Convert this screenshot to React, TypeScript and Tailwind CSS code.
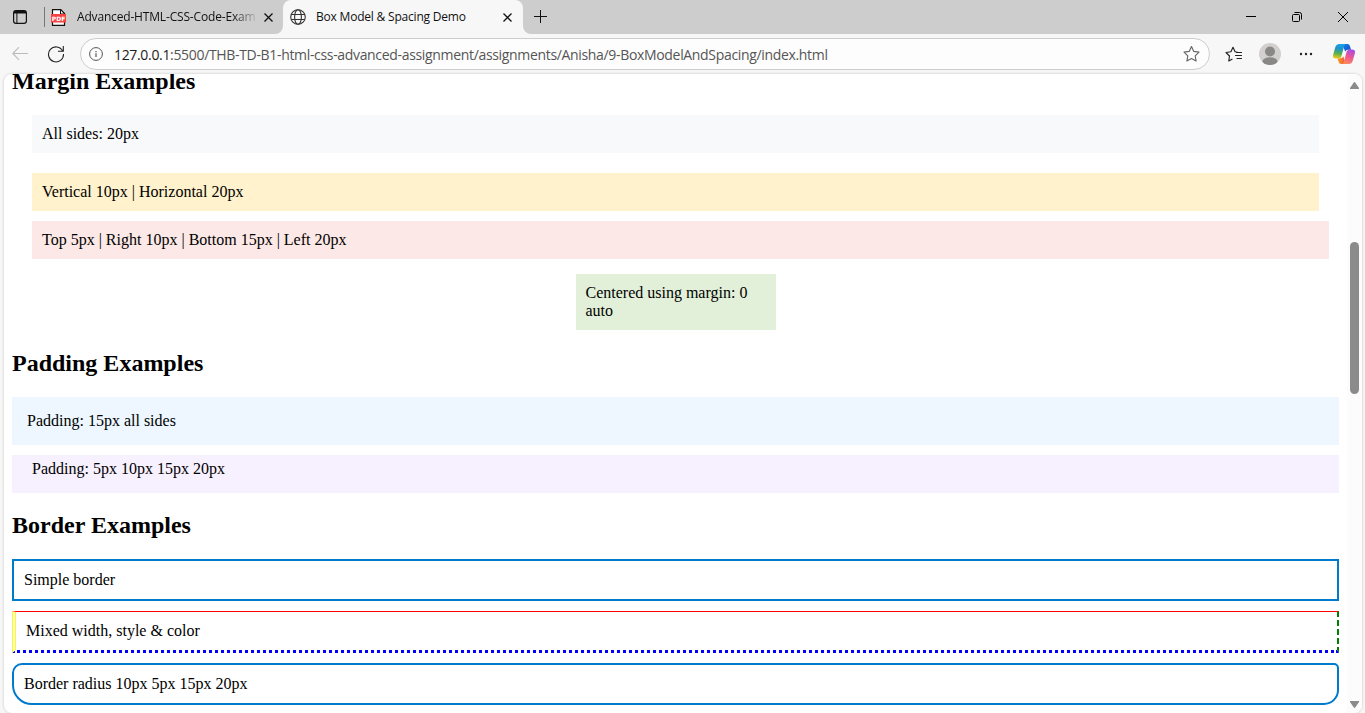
import React from 'react';

const Close = () => (
  <svg width="9" height="9" viewBox="0 0 9 9" stroke="#111" strokeWidth="1.3" className="shrink-0">
    <path d="M.5.5l8 8M8.5.5l-8 8" />
  </svg>
);

const Star = ({ list = false }: { list?: boolean }) => (
  <svg width="18" height="18" viewBox="0 0 18 18" fill="none" stroke={list ? '#222' : '#666'} strokeWidth="1.15" strokeLinejoin="round" strokeLinecap="round">
    {list ? (
      <>
        <path d="M7 14.2l-3.2 1.7.7-4.9L1 7.5l4.9-.7L8 2.3l2.1 4.5 1.9.2" />
        <path d="M11.5 7.5H16.500M10.5 10.5H16.500M12 13.5h4.500" />
      </>
    ) : (
      <path d="M8.500 1.600l2.300 4.800 5.200.7-3.800 3.700.9 5.200-4.600-2.500L3.900 16l.9-5.200L1 7.100l5.200-.7z" />
    )}
  </svg>
);

function TabStrip() {
  return (
    <div className="flex h-[34px] items-stretch bg-[#f7f7f7] text-[12px] text-[#111]">
      <div className="flex w-[283px] items-center rounded-br-lg bg-[#cdcdcd]">
        <svg width="14" height="14" viewBox="0 0 14 14" fill="none" stroke="#111" className="ml-[13px]">
          <rect x=".6" y=".6" width="12.800" height="12.800" rx="2.400" strokeWidth="1.200" />
          <path d="M1 2.200h12" strokeWidth="2.600" />
          <path d="M3.900 3v10.500" strokeWidth="1" />
        </svg>
        <div className="ml-[17px] h-5 w-px bg-[#777]" />
        <svg width="15" height="17" viewBox="0 0 15 17" className="ml-[6px]">
          <path d="M1.500 .7h8.300L13.500 4.500v11.800h-12z" fill="#fff" stroke="#111" strokeWidth="1.200" />
          <path d="M9.500 1v4h4" fill="none" stroke="#111" />
          <rect y="5" width="15" height="8.500" fill="#f44444" />
          <text x="7.500" y="11.500" textAnchor="middle" fontSize="6" fontWeight="700" fill="#fff" fontFamily="DejaVu Sans, sans-serif">PDF</text>
        </svg>
        <div className="ml-[11px] w-[179px] whitespace-nowrap tracking-[-0.17px] [mask-image:linear-gradient(to_right,#000_155px,transparent_182px)]">Advanced-HTML-CSS-Code-Exam</div>
        <div className="ml-[8px]"><Close /></div>
      </div>
      <div className="w-[240px] bg-[linear-gradient(#cdcdcd_50%,#f7f7f7_50%)]">
        <div className="flex h-full items-center rounded-t-lg bg-[#f7f7f7]">
          <svg width="16" height="16" viewBox="0 0 16 16" fill="none" stroke="#333" strokeWidth="1.100" className="ml-[7px]">
            <circle cx="8" cy="8" r="7.300" />
            <ellipse cx="8" cy="8" rx="3.400" ry="7.300" />
            <path d="M1.300 5.500h13.400M1.300 10.500h13.400" />
          </svg>
          <div className="ml-[10px] w-[178px] whitespace-nowrap tracking-[-0.2px]">Box Model &amp; Spacing Demo</div>
          <div className="ml-[9px]"><Close /></div>
        </div>
      </div>
      <div className="flex flex-1 items-center rounded-bl-lg bg-[#cdcdcd]">
        <svg width="13" height="13" viewBox="0 0 13 13" stroke="#111" className="ml-[11px] -mt-[2px]"><path d="M6.500 0v13M0 6.500h13" /></svg>
        <div className="flex-1" />
        <svg width="10" height="10" viewBox="0 0 10 10" stroke="#000"><path d="M0 4.500h10" /></svg>
        <svg width="10" height="10" viewBox="0 0 10 10" stroke="#000" fill="none" className="ml-[36px]">
          <rect x=".5" y="2.500" width="7" height="7" rx="1" /><path d="M2.500.5h5q2 0 2 2v5" />
        </svg>
        <svg width="10" height="10" viewBox="0 0 10 10" stroke="#000" className="ml-[36px] mr-[17px]"><path d="M0 0l10 10M10 0L0 10" /></svg>
      </div>
    </div>
  );
}

function Toolbar() {
  return (
    <div className="flex h-[40px] items-center bg-[#f7f7f7]">
      <svg width="16" height="14" viewBox="0 0 16 14" fill="none" stroke="#bbb" strokeWidth="1.100" className="ml-[12px]"><path d="M16 6.500H.8M7 .2L.8 6.500 7 12.800" /></svg>
      <svg width="18" height="18" viewBox="0 0 18 18" fill="none" stroke="#222" strokeWidth="1.100" className="ml-[19px]"><path d="M15.700 6A7.500 7.500 0 1 0 16.500 9M16.300 1v5.200H11" /></svg>
      <div className="ml-[15px] flex h-8 w-[1130px] items-center rounded-full border border-[#cdcdcd] bg-[#fdfdfd]">
        <svg width="14" height="14" viewBox="0 0 14 14" fill="none" stroke="#555" className="ml-[8px]"><circle cx="7" cy="7" r="6.400" /><path d="M7 6.300v3.700M7 4v1.200" strokeWidth="1.200" /></svg>
        <div className="ml-[11px] w-[1069px] whitespace-nowrap text-[14px] tracking-[-0.33px] text-[#555]"><span className="text-[#1b1b1b]">127.0.0.1</span>:5500/THB-TD-B1-html-css-advanced-assignment/assignments/Anisha/9-BoxModelAndSpacing/index.html</div>
        <Star />
      </div>
      <div className="ml-[15px]"><Star list /></div>
      <svg width="22" height="22" viewBox="0 0 22 22" className="ml-[16px]">
        <defs><clipPath id="face"><circle cx="11" cy="11" r="11" /></clipPath></defs>
        <g clipPath="url(#face)"><rect width="22" height="22" fill="#d2d0ce" /><circle cx="11" cy="8.500" r="5" fill="#8a8886" /><ellipse cx="11" cy="18.500" rx="7.500" ry="4.200" fill="#8a8886" /></g>
      </svg>
      <svg width="14" height="4" viewBox="0 0 14 4" fill="#222" className="ml-[18px]"><circle cx="2" cy="2" r="1.200" /><circle cx="7" cy="2" r="1.200" /><circle cx="12" cy="2" r="1.200" /></svg>
      <svg width="22" height="20" viewBox="0 0 22 20" className="ml-[20px]">
        <defs>
          <linearGradient id="cl" x1=".5" y1="0" x2=".35" y2="1"><stop stopColor="#16a0e8" /><stop offset=".3" stopColor="#1d93cf" /><stop offset=".65" stopColor="#54b050" /><stop offset="1" stopColor="#f5c915" /></linearGradient>
          <linearGradient id="cr" x1=".7" y1="0" x2=".3" y2="1"><stop stopColor="#a64be8" /><stop offset=".5" stopColor="#ee5790" /><stop offset="1" stopColor="#ff8a5a" /></linearGradient>
          <linearGradient id="cb" x1="0" y1="0" x2="1" y2="1"><stop stopColor="#1584e8" /><stop offset="1" stopColor="#1348c8" /></linearGradient>
          <linearGradient id="co" x1="0" y1="0" x2="1" y2="0"><stop stopColor="#f8a124" /><stop offset="1" stopColor="#ee4e3c" /></linearGradient>
        </defs>
        <path d="M9 0h5.500q1.800 0 2.400 2l1.100 3.800h-3.500q-1.600 0-2.200 2z" fill="url(#cb)" />
        <path d="M13 20H8q-1.800 0-2.400-2L4.500 14.200H8q1.600 0 2.200-2z" fill="url(#co)" />
        <path d="M6.500 0h6.300q-1.200.5-1.700 2.200L8.500 12q-.7 2.500-3 2.500H3Q-.8 14.500.2 10.500L2.200 3.500Q3.200 0 6.500 0z" fill="url(#cl)" />
        <path d="M15.500 20H9.200q1.200-.5 1.700-2.200L13.500 8q.7-2.500 3-2.500H19q3.800 0 2.800 4l-2 7Q18.800 20 15.500 20z" fill="url(#cr)" />
      </svg>
    </div>
  );
}

export default function App() {
  return (
    <div className="flex h-[713px] w-[1365px] flex-col overflow-hidden bg-[#f7f7f7] font-['Open_Sans',sans-serif]">
      <TabStrip />
      <Toolbar />
      <div className="mx-[4px] flex h-[639px] w-[1358px] overflow-hidden rounded-lg bg-white shadow-[0_0_2px_1px_#dedede]">
        <main className="w-[1343px] px-2 font-['Liberation_Serif',serif] text-[16px] leading-[18px] text-black">
          <h2 className="-mt-[6px] text-[24px] leading-[27px] font-bold">Margin Examples</h2>
          <div className="m-5 bg-[#f8f9fb] p-[10px]">All sides: 20px</div>
          <div className="mx-5 mb-[10px] bg-[#fff2cc] p-[10px]">Vertical 10px | Horizontal 20px</div>
          <div className="mr-[10px] mb-[15px] ml-5 bg-[#fce8e6] p-[10px]">Top 5px | Right 10px | Bottom 15px | Left 20px</div>
          <div className="mx-auto w-[200px] bg-[#e2f0d9] p-[10px]">Centered using margin: 0 auto</div>
          <h2 className="my-5 text-[24px] leading-[27px] font-bold">Padding Examples</h2>
          <div className="mb-[10px] bg-[#eef7ff] p-[15px]">Padding: 15px all sides</div>
          <div className="bg-[#f7f0ff] pt-[5px] pr-[10px] pb-[15px] pl-5">Padding: 5px 10px 15px 20px</div>
          <h2 className="mt-[19px] mb-5 text-[24px] leading-[27px] font-bold">Border Examples</h2>
          <div className="mb-[10px] border-2 border-[#007acc] p-[10px]">Simple border</div>
          <div className="mb-[10px] border-t border-r-2 border-b-[3px] border-l-4 border-t-[red] border-r-[green] border-b-[blue] border-l-[yellow] p-[10px] [border-style:solid_dashed_dotted_double]">Mixed width, style &amp; color</div>
          <div className="rounded-[10px_5px_15px_20px] border-2 border-[#007acc] p-[10px]">Border radius 10px 5px 15px 20px</div>
        </main>
        <div className="flex w-[15px] flex-col items-center bg-[#fcfcfc]">
          <svg width="9" height="7" viewBox="0 0 9 7" fill="#8b8b8b" className="mt-[8px]"><path d="M3.800.5Q4.500-.3 5.200.5L9 6v1H0V6z" /></svg>
          <div className="mt-[153px] h-[152px] w-[9px] rounded-full bg-[#8b8b8b]" />
          <div className="flex-1" />
          <svg width="9" height="7" viewBox="0 0 9 7" fill="#8b8b8b" className="mb-[5px]"><path d="M3.800 6.500Q4.500 7.300 5.200 6.500L9 1V0H0v1z" /></svg>
        </div>
      </div>
    </div>
  );
}
